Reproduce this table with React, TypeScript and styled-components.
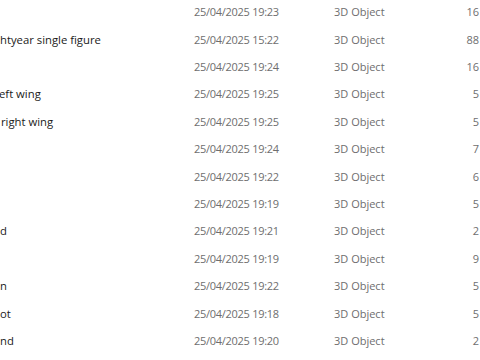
import React from "react";
import styled, {createGlobalStyle} from "styled-components";

const GlobalStyle = createGlobalStyle`
  html, body {
    margin: 0;
    padding: 0;
    background: #ffffff;
  }
  body {
    font-family: "Open Sans", "Noto Sans", sans-serif;
  }
`

const ListView = styled.div`
  width: 480px;
  height: 360px;
  overflow: hidden;
  background: #ffffff;
  padding-top: 0;
`

const Row = styled.div`
  display: grid;
  grid-template-columns: 194px 140px 1fr 40px;
  align-items: center;
  height: 27.42px;
  font-size: 11px;
  white-space: nowrap;
  &:first-child {
    margin-top: -2px;
  }
`

const NameCell = styled.span<{$shift: number}>`
  color: #1a1a1a;
  font-size: 11.3px;
  margin-left: ${p => p.$shift}px;
  overflow: hidden;
`

const MutedCell = styled.span`
  color: #6e6e6e;
`

const DateCell = styled(MutedCell)`
  letter-spacing: -0.28px;
`

const SizeCell = styled(MutedCell)`
  text-align: right;
  padding-right: 1px;
`

type FileRow = {name: string; shift: number; modified: string; size: string}

const files: FileRow[] = [
  {name: "", shift: 0, modified: "25/04/2025 19:23", size: "16"},
  {name: "htyear single figure", shift: 0, modified: "25/04/2025 15:22", size: "88"},
  {name: "", shift: 0, modified: "25/04/2025 19:24", size: "16"},
  {name: "eft wing", shift: -1, modified: "25/04/2025 19:25", size: "5"},
  {name: "right wing", shift: 1, modified: "25/04/2025 19:25", size: "5"},
  {name: "", shift: 0, modified: "25/04/2025 19:24", size: "7"},
  {name: "", shift: 0, modified: "25/04/2025 19:22", size: "6"},
  {name: "", shift: 0, modified: "25/04/2025 19:19", size: "5"},
  {name: "d", shift: 0, modified: "25/04/2025 19:21", size: "2"},
  {name: "", shift: 0, modified: "25/04/2025 19:19", size: "9"},
  {name: "n", shift: 0, modified: "25/04/2025 19:22", size: "5"},
  {name: "ot", shift: 0, modified: "25/04/2025 19:18", size: "5"},
  {name: "nd", shift: 0, modified: "25/04/2025 19:20", size: "2"},
]

export default function App(): React.JSX.Element {
  return (
    <>
      <GlobalStyle/>
      <ListView>
        {files.map((f, i) => (
          <Row key={i}>
            <NameCell $shift={f.shift}>{f.name}</NameCell>
            <DateCell>{f.modified}</DateCell>
            <MutedCell>3D Object</MutedCell>
            <SizeCell>{f.size}</SizeCell>
          </Row>
        ))}
      </ListView>
    </>
  )
}
